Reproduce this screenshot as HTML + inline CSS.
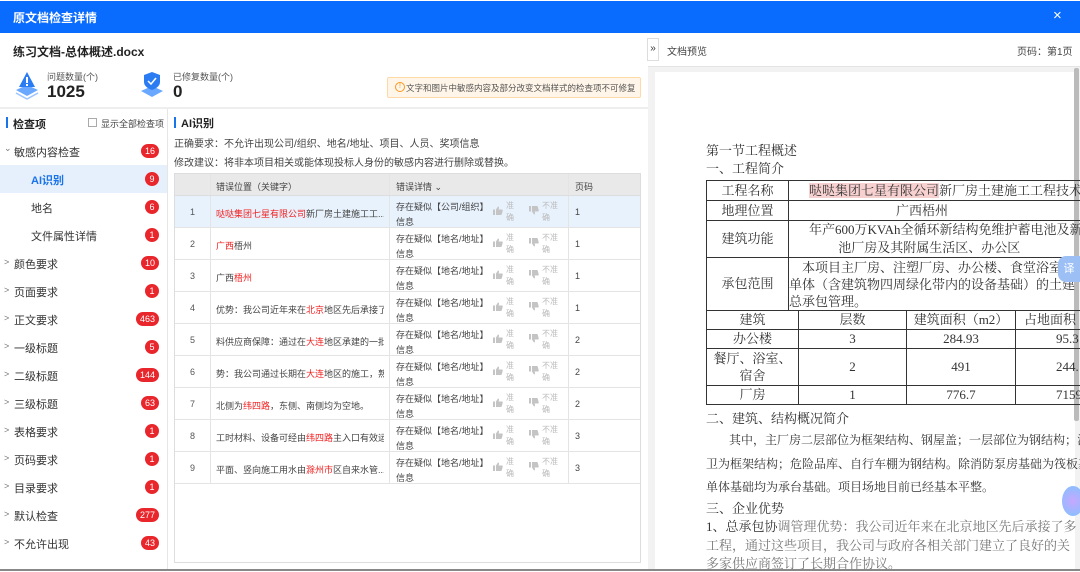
<!DOCTYPE html>
<html><head><meta charset="utf-8"><style>
*{margin:0;padding:0;box-sizing:border-box}
body{width:1080px;height:571px;overflow:hidden;background:#fff;font-family:"Liberation Sans","Noto Sans CJK SC",sans-serif;color:#333;position:relative;font-size:11px}
.a{position:absolute;white-space:nowrap}
.hdr{left:0;top:1px;width:1080px;height:32px;background:#0a6cff}
.nav{left:0;width:167px;height:28px;font-size:11px;color:#333}
.nav .t{position:absolute;left:31px;top:7px}
.nav .ar{position:absolute;left:4px;top:8px;color:#777;font-size:9px}
.bd{position:absolute;right:8px;top:7px;height:14px;min-width:14px;padding:0 4px;border-radius:7px;background:#e8262b;color:#fff;font-size:9px;line-height:14px;text-align:center}
.tb{left:174px;top:173px;width:467px;height:390px;border:1px solid #ddd;background:#fff}
.row{position:absolute;left:0;width:465px;height:32px;border-bottom:1px solid #e4e4e4;font-size:9px}
.row div{position:absolute}
.c1{left:0;width:35px;text-align:center;top:11px;color:#555}
.c2{left:41px;top:11px;width:168px;overflow:hidden;color:#444}
.c3{left:221px;top:4px;line-height:15px;color:#444}
.c4{left:400px;top:11px;color:#444}
.v1{left:214px;top:0;width:1px;height:100%;background:#e4e4e4}
.v2{left:393px;top:0;width:1px;height:100%;background:#e4e4e4}
.v0{left:35px;top:0;width:1px;height:100%;background:#e4e4e4}
.up{left:318px;top:4px;color:#bbb;line-height:12px;font-size:8px}
.dn{left:354px;top:4px;color:#bbb;line-height:12px;font-size:8px}
.up svg,.dn svg{position:absolute;left:0;top:6px}
.up span,.dn span{position:absolute;left:13px;top:0}
.r{color:#f02020}
.doc{font-family:"Liberation Serif","Noto Serif CJK SC",serif;font-size:13px;color:#333}
table.d{border-collapse:collapse;position:absolute;font-family:"Liberation Serif","Noto Serif CJK SC",serif;font-size:13px;color:#333}
table.d td{border:1px solid #333;text-align:center;padding:0;line-height:18px;white-space:nowrap;overflow:hidden}
</style></head><body>
<div class="a hdr"></div>
<div class="a" style="left:13px;top:9px;color:#fff;font-weight:bold;font-size:12px">原文档检查详情</div>
<div class="a" style="left:1053px;top:7px;color:#fff;font-size:15px">×</div>

<div class="a" style="left:13px;top:43px;font-size:12px;font-weight:bold;color:#222">练习文档-总体概述.docx</div>
<svg class="a" style="left:14px;top:70px" width="26" height="30" viewBox="0 0 26 30"><path d="M2 20 L13 26 L24 20 L13 15Z" fill="#6aa8ff"/><path d="M2 23 L13 29 L24 23" fill="none" stroke="#9cc4ff" stroke-width="1.5"/><path d="M13 2 L21 17 L5 17Z" fill="#2b7cf2"/><rect x="12" y="7" width="2" height="6" fill="#fff"/><rect x="12" y="14" width="2" height="2" fill="#fff"/></svg>
<div class="a" style="left:47px;top:70px;font-size:9px;color:#555">问题数量(个)</div>
<div class="a" style="left:47px;top:82px;font-size:17px;font-weight:bold;color:#222">1025</div>
<svg class="a" style="left:139px;top:70px" width="26" height="30" viewBox="0 0 26 30"><path d="M2 21 L13 27 L24 21 L13 16Z" fill="#6aa8ff"/><path d="M13 2 L21 5 L21 12 Q21 17 13 20 Q5 17 5 12 L5 5Z" fill="#2b7cf2"/><path d="M9 11 L12 14 L17 8" fill="none" stroke="#fff" stroke-width="1.5"/></svg>
<div class="a" style="left:173px;top:70px;font-size:9px;color:#555">已修复数量(个)</div>
<div class="a" style="left:173px;top:82px;font-size:17px;font-weight:bold;color:#222">0</div>
<div class="a" style="left:387px;top:77px;width:254px;height:21px;background:#fff5e8;border:1px solid #ffd9a6;border-radius:2px"></div>
<div class="a" style="left:395px;top:82px;width:10px;height:10px;border:1px solid #f59a23;border-radius:50%;color:#f59a23;font-size:7px;line-height:8px;text-align:center">!</div>
<div class="a" style="left:406px;top:82px;font-size:8.5px;color:#555">文字和图片中敏感内容及部分改变文档样式的检查项不可修复</div>
<div class="a" style="left:0;top:107px;width:648px;height:2px;background:#eee"></div>

<div class="a" style="left:167px;top:109px;width:1px;height:462px;background:#e6e6e6"></div>
<div class="a" style="left:6px;top:117px;width:2px;height:11px;background:#1a73e8"></div>
<div class="a" style="left:13px;top:116px;font-size:11px;font-weight:bold;color:#222">检查项</div>
<div class="a" style="left:88px;top:118px;width:9px;height:9px;border:1px solid #aaa;background:#fff"></div>
<div class="a" style="left:101px;top:117px;font-size:9px;color:#444">显示全部检查项</div>

<div class="a nav" style="top:137px"><span class="ar" style="top:6px">⌄</span><span class="t" style="left:14px">敏感内容检查</span><span class="bd">16</span></div>
<div class="a nav" style="top:165px;background:#e6f0fc"><span class="t" style="color:#1a73e8;font-weight:bold">AI识别</span><span class="bd">9</span></div>
<div class="a nav" style="top:193px"><span class="t">地名</span><span class="bd">6</span></div>
<div class="a nav" style="top:221px"><span class="t">文件属性详情</span><span class="bd">1</span></div>
<div class="a nav" style="top:249px"><span class="ar">&gt;</span><span class="t" style="left:14px">颜色要求</span><span class="bd">10</span></div>
<div class="a nav" style="top:277px"><span class="ar">&gt;</span><span class="t" style="left:14px">页面要求</span><span class="bd">1</span></div>
<div class="a nav" style="top:305px"><span class="ar">&gt;</span><span class="t" style="left:14px">正文要求</span><span class="bd">463</span></div>
<div class="a nav" style="top:333px"><span class="ar">&gt;</span><span class="t" style="left:14px">一级标题</span><span class="bd">5</span></div>
<div class="a nav" style="top:361px"><span class="ar">&gt;</span><span class="t" style="left:14px">二级标题</span><span class="bd">144</span></div>
<div class="a nav" style="top:389px"><span class="ar">&gt;</span><span class="t" style="left:14px">三级标题</span><span class="bd">63</span></div>
<div class="a nav" style="top:417px"><span class="ar">&gt;</span><span class="t" style="left:14px">表格要求</span><span class="bd">1</span></div>
<div class="a nav" style="top:445px"><span class="ar">&gt;</span><span class="t" style="left:14px">页码要求</span><span class="bd">1</span></div>
<div class="a nav" style="top:473px"><span class="ar">&gt;</span><span class="t" style="left:14px">目录要求</span><span class="bd">1</span></div>
<div class="a nav" style="top:501px"><span class="ar">&gt;</span><span class="t" style="left:14px">默认检查</span><span class="bd">277</span></div>
<div class="a nav" style="top:529px"><span class="ar">&gt;</span><span class="t" style="left:14px">不允许出现</span><span class="bd">43</span></div>

<div class="a" style="left:174px;top:117px;width:2px;height:11px;background:#1a73e8"></div>
<div class="a" style="left:181px;top:115px;font-size:11px;font-weight:bold;color:#222">AI识别</div>
<div class="a" style="left:174px;top:135px;font-size:10px;color:#444">正确要求：不允许出现公司/组织、地名/地址、项目、人员、奖项信息</div>
<div class="a" style="left:174px;top:154px;font-size:10px;color:#444">修改建议：将非本项目相关或能体现投标人身份的敏感内容进行删除或替换。</div>

<div class="a tb">
<div class="row" style="top:0;height:22px;background:#e9e9e9;border-bottom:1px solid #ddd"><div class="v0"></div><div class="v1"></div><div class="v2"></div>
<div style="left:41px;top:6px;color:#444">错误位置（关键字）</div><div style="left:221px;top:6px;color:#444">错误详情 ⌄</div><div style="left:400px;top:6px;color:#444">页码</div></div>
</div>
<div id="rows"></div>
<script>
var data=[
["1",'<span class="r">哒哒集团七星有限公司</span>新厂房土建施工工...',"公司/组织","1"],
["2",'<span class="r">广西</span>梧州',"地名/地址","1"],
["3",'广西<span class="r">梧州</span>',"地名/地址","1"],
["4",'优势：我公司近年来在<span class="r">北京</span>地区先后承接了多',"地名/地址","1"],
["5",'料供应商保障：通过在<span class="r">大连</span>地区承建的一批大',"地名/地址","2"],
["6",'势：我公司通过长期在<span class="r">大连</span>地区的施工，熟悉',"地名/地址","2"],
["7",'北侧为<span class="r">纬四路</span>，东侧、南侧均为空地。',"地名/地址","2"],
["8",'工时材料、设备可经由<span class="r">纬四路</span>主入口有效运输',"地名/地址","3"],
["9",'平面、竖向施工用水由<span class="r">滁州市</span>区自来水管...',"地名/地址","3"]];
var up='<svg width="10" height="9" viewBox="0 0 10 9"><rect x="0" y="3.5" width="2" height="5.5" fill="#c4c4c4"/><path d="M3 3.5 L5 0.5 Q6.2 0.5 6 2 L5.6 3.5 L9 3.5 Q10 3.7 9.7 4.8 L8.8 8.3 Q8.5 9 7.8 9 L3 9Z" fill="#c4c4c4"/></svg>';
var dn='<svg width="10" height="9" viewBox="0 0 10 9" style="transform:scaleY(-1)"><rect x="0" y="3.5" width="2" height="5.5" fill="#c4c4c4"/><path d="M3 3.5 L5 0.5 Q6.2 0.5 6 2 L5.6 3.5 L9 3.5 Q10 3.7 9.7 4.8 L8.8 8.3 Q8.5 9 7.8 9 L3 9Z" fill="#c4c4c4"/></svg>';
var h='';
data.forEach(function(d,i){
h+='<div class="row" style="top:'+(22+32*i)+'px'+(i==0?';background:#e8f2fd':'')+'"><div class="v0"></div><div class="v1"></div><div class="v2"></div><div class="c1">'+d[0]+'</div><div class="c2">'+d[1]+'</div><div class="c3">存在疑似【'+d[2]+'】<br>信息</div><div class="up">'+up+'<span>准<br>确</span></div><div class="dn">'+dn+'<span>不准<br>确</span></div><div class="c4">'+d[3]+'</div></div>';});
document.querySelector('.tb').innerHTML+=h;
</script>

<div class="a" style="left:648px;top:33px;width:432px;height:538px;background:#f2f2f2"></div>
<div class="a" style="left:648px;top:33px;width:432px;height:34px;background:#fff;border-bottom:1px solid #e4e4e4"></div>
<div class="a" style="left:647px;top:38px;width:12px;height:23px;border:1px solid #ddd;background:#fff;font-size:10px;line-height:20px;text-align:center;color:#333">»</div>
<div class="a" style="left:667px;top:43px;font-size:10px;color:#444">文档预览</div>
<div class="a" style="left:1017px;top:43px;font-size:10px;color:#444">页码：第1页</div>
<div class="a" style="left:655px;top:72px;width:420px;height:499px;background:#fff"></div>
<div class="a" style="left:1074px;top:68px;width:5px;height:353px;background:#bbb;border-radius:2px"></div>

<div class="a doc" style="left:706px;top:140px">第一节工程概述</div>
<div class="a doc" style="left:706px;top:158px">一、工程简介</div>
<table class="d" style="left:706px;top:180px;width:380px">
<tr style="height:20px"><td style="width:82px">工程名称</td><td style="text-align:left;padding-left:20px"><span style="background:#f7d0d0">哒哒集团七星有限公司</span>新厂房土建施工工程技术</td></tr>
<tr style="height:20px"><td>地理位置</td><td style="padding-right:30px">广西梧州</td></tr>
<tr style="height:37px"><td>建筑功能</td><td style="text-align:left;padding-left:20px">年产600万KVAh全循环新结构免维护蓄电池及新<br>&nbsp;&nbsp;&nbsp;&nbsp;&nbsp;&nbsp;&nbsp;&nbsp;&nbsp;池厂房及其附属生活区、办公区</td></tr>
<tr style="height:53px"><td>承包范围</td><td style="text-align:left;line-height:17px">&nbsp;&nbsp;&nbsp;&nbsp;本项目主厂房、注塑厂房、办公楼、食堂浴室<br>单体（含建筑物四周绿化带内的设备基础）的土建<br>总承包管理。</td></tr>
</table>
<table class="d" style="left:706px;top:310px;width:380px">
<tr style="height:19px"><td style="width:92px">建筑</td><td style="width:108px">层数</td><td style="width:109px">建筑面积（m2）</td><td style="text-align:left;padding-left:8px">占地面积</td></tr>
<tr style="height:19px"><td>办公楼</td><td>3</td><td>284.93</td><td style="text-align:left;padding-left:40px">95.3</td></tr>
<tr style="height:37px"><td style="line-height:17px">餐厅、浴室、<br>宿舍</td><td>2</td><td>491</td><td style="text-align:left;padding-left:40px">244.</td></tr>
<tr style="height:19px"><td>厂房</td><td>1</td><td>776.7</td><td style="text-align:left;padding-left:40px">7159</td></tr>
</table>
<div class="a doc" style="left:706px;top:408px">二、建筑、结构概况简介</div>
<div class="a doc" style="left:729px;top:431px;font-size:12px">其中，主厂房二层部位为框架结构、钢屋盖；一层部位为钢结构；消防</div>
<div class="a doc" style="left:706px;top:455px;font-size:12px">卫为框架结构；危险品库、自行车棚为钢结构。除消防泵房基础为筏板基础</div>
<div class="a doc" style="left:706px;top:478px;font-size:12px">单体基础均为承台基础。项目场地目前已经基本平整。</div>
<div class="a doc" style="left:706px;top:498px">三、企业优势</div>
<div class="a doc" style="left:706px;top:516px">1、总承包协<span style="color:#777">调管理优势：我公司近年来在北京地区先后承接了多</span></div>
<div class="a doc" style="left:706px;top:535px;color:#777">工程，通过这些项目，我公司与政府各相关部门建立了良好的关</div>
<div class="a doc" style="left:706px;top:553px;color:#777">多家供应商签订了长期合作协议。</div>
<div class="a" style="left:1058px;top:256px;width:22px;height:26px;background:#9cc0f5;border-radius:8px 0 0 8px;color:#fff;font-size:11px;line-height:26px;text-align:center">译</div>
<div class="a" style="left:1062px;top:486px;width:22px;height:30px;background:radial-gradient(circle,#c6a8ff,#7fc3ff);border-radius:50%"></div>
<div class="a" style="left:0;top:569px;width:1080px;height:2px;background:#888"></div>
</body></html>
